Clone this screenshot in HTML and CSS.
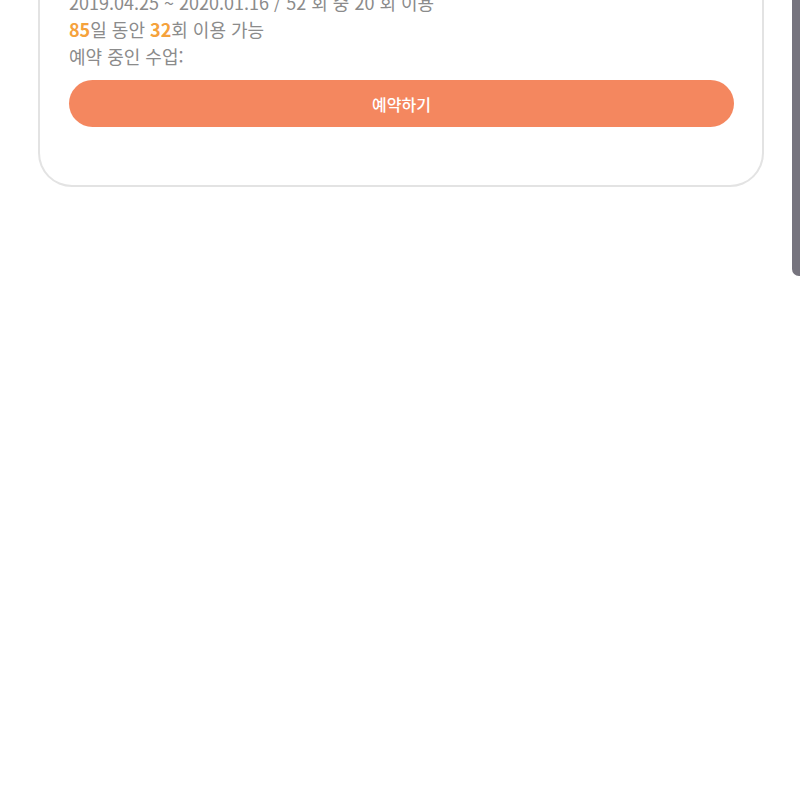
FILE: index.html
```html
<!DOCTYPE html>
<html lang="ko">
<head>
<meta charset="utf-8">
<title>예약</title>
<link rel="stylesheet" href="styles.css">
</head>
<body>
<main class="page">
  <section class="card">
    <p class="line">2019.04.25 ~ 2020.01.16 / 52 회 중 20 회 이용</p>
    <p class="line"><b class="num">85</b>일 동안 <b class="num">32</b>회 이용 가능</p>
    <p class="line">예약 중인 수업:</p>
    <button class="btn" type="button">예약하기</button>
  </section>
</main>
<div class="scrollbar"></div>
</body>
</html>
```
FILE: styles.css
```css
html, body {
  margin: 0;
  padding: 0;
  background: #ffffff;
}
body {
  font-family: "Noto Sans CJK KR", "Noto Sans", sans-serif;
  overflow: hidden;
}
.page {
  padding: 0 36px 0 38px;
}
.card {
  margin-top: -40px;
  padding: 29px 28px 58px 29px;
  border: 2px solid #e3e3e3;
  border-top: none;
  border-radius: 0 0 34px 34px;
  display: flex;
  flex-direction: column;
}
.line {
  margin: 0;
  font-size: 18px;
  line-height: 27px;
  color: #8b8b8b;
}
.num {
  color: #f5a23c;
  font-weight: 700;
}
.btn {
  margin-top: 10px;
  height: 47px;
  border: none;
  border-radius: 24px;
  background: #f4875f;
  color: #ffffff;
  font-family: "Noto Sans CJK KR", "Noto Sans", sans-serif;
  font-size: 16px;
  font-weight: 500;
}
.scrollbar {
  position: fixed;
  top: 0;
  right: 0;
  width: 8px;
  height: 276px;
  background: #76747e;
  border-bottom-left-radius: 7px;
}
```
